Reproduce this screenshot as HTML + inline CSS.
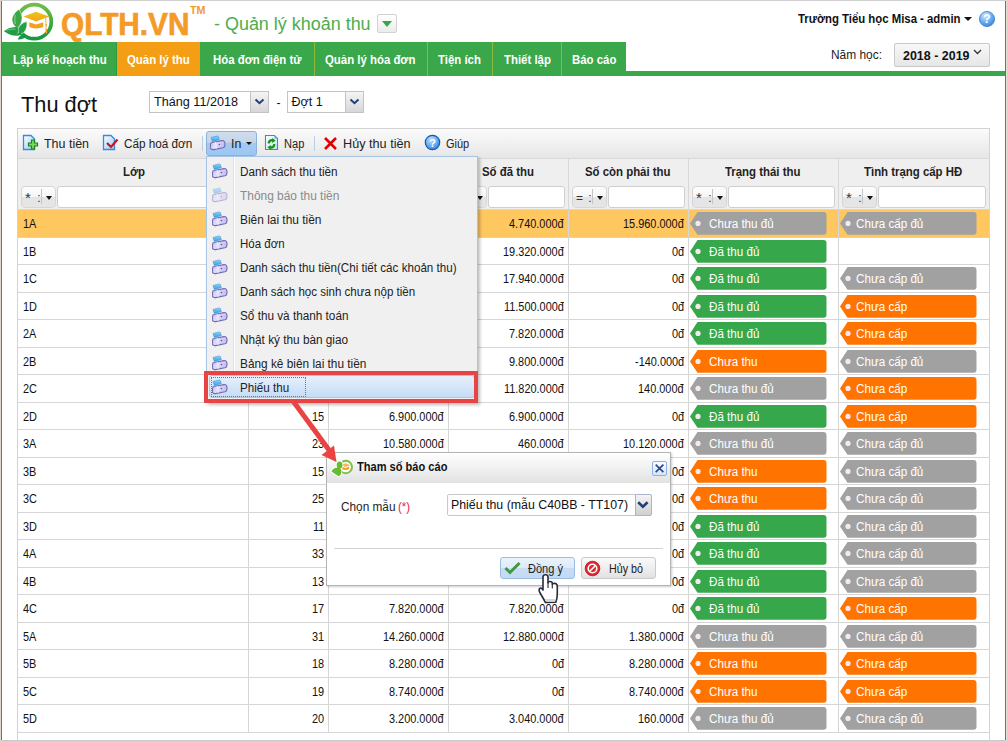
<!DOCTYPE html><html><head><meta charset="utf-8"><style>
*{box-sizing:border-box;margin:0;padding:0}
html,body{width:1007px;height:741px;overflow:hidden;background:#fff;font-family:"Liberation Sans",sans-serif;color:#000}
div,span,svg{position:absolute}
.t{white-space:nowrap;line-height:1}
.tag{border-radius:0 4px 4px 0}
</style></head><body>
<div style="left:0;top:0;width:1007px;height:1px;background:#d0d0d0"></div>
<div style="left:0;top:740px;width:1007px;height:1px;background:#c9c9c9"></div>
<div style="left:0;top:0;width:1px;height:741px;background:#e3d6cb"></div>
<div style="left:1px;top:1px;width:1px;height:739px;background:#2584d8"></div>
<div style="left:1005px;top:1px;width:1px;height:739px;background:#2584d8"></div>
<div style="left:1006px;top:0;width:1px;height:741px;background:#e6dcd2"></div>
<svg style="left:0;top:0" width="60" height="44" viewBox="0 0 60 44">
<defs><linearGradient id="lg" x1="0" y1="0" x2="0" y2="1"><stop offset="0" stop-color="#6fbe45"/><stop offset="1" stop-color="#17983f"/></linearGradient>
<linearGradient id="lf" x1="0" y1="0" x2="0" y2="1"><stop offset="0" stop-color="#4cb047"/><stop offset="1" stop-color="#14963e"/></linearGradient>
<linearGradient id="cap" x1="0" y1="0" x2="0" y2="1"><stop offset="0" stop-color="#ecc516"/><stop offset="1" stop-color="#f4a21c"/></linearGradient></defs>
<circle cx="34.3" cy="21.7" r="17" fill="none" stroke="url(#lg)" stroke-width="3.8"/>
<path d="M18.5 9.6 C14 13 11.5 17.5 12.2 21 C12.7 24.5 15 27 17.6 28 C20.5 25.5 22.2 21.5 22 17.5 C21.9 14.5 20.5 11.5 18.5 9.6Z" fill="#3aa646" stroke="#fff" stroke-width="0.5"/>
<path d="M3.9 31.3 C6.5 28.8 10.5 27 15.6 26.9 C17.5 27 18.5 27.8 19.5 29 C18 32.5 16.5 35 15 35.7 C11 35.5 7 33.5 3.9 31.3Z" fill="#1f9e45"/>
<path d="M18.3 29 C19.5 25 22.5 22.5 26.8 21.6 C27.3 25 26.5 29 25 31 C23.5 33 21.5 34 19.5 34.2 C18.5 32.5 18.2 30.5 18.3 29Z" fill="#22a045" stroke="#fff" stroke-width="0.5"/>
<path d="M15 35.5 C16.5 34 18 33 19.5 32 L22 34.5 C20 35.5 18 36 15 35.5Z" fill="#1c9a44"/>
<path d="M17.8 39.5 C18.5 37 20.5 35 22.5 34.5 L25 34 C26 35 27 35.5 27.5 36 C25 38 21.5 39.8 17.8 39.5Z" fill="#139a48"/>
<path d="M15.3 15 C14.7 18 14.7 21.5 15.3 24" fill="none" stroke="#fff" stroke-width="0.6" opacity="0.75"/>
<path d="M6.5 30.6 C9.5 29.2 12.5 28.8 15.5 29.2" fill="none" stroke="#fff" stroke-width="0.6" opacity="0.6"/>
<path d="M23.6 16.4 L36 11.8 L49.4 16.4 L36 21.6Z" fill="url(#cap)"/>
<path d="M29.3 22.3 L36.2 24.6 L43.3 22.3 V26.8 C40 29 32.5 29 29.3 26.8Z" fill="#f5a01f"/>
<path d="M45.6 17 L46.3 31" stroke="#f3b02a" stroke-width="0.9"/><circle cx="46.3" cy="25" r="0.9" fill="#f3b02a"/><path d="M45.6 29 L47.4 29 L47 33.5 L45.8 33.5Z" fill="#f5a01f"/>
</svg>
<div class="t" style="left:61.30px;top:8.84px;font-size:31.5px;font-weight:bold;color:#f49b27;transform:scaleX(0.9455);transform-origin:0 0;-webkit-text-stroke:0.7px #f49b27">QLTH.VN</div>
<div class="t" style="left:189.50px;top:5.11px;font-size:10.5px;font-weight:bold;color:#f49b27;transform:scaleX(1.0216);transform-origin:0 0;">TM</div>
<div class="t" style="left:214.00px;top:15.79px;font-size:17.5px;color:#4cae4c;transform:scaleX(1.0253);transform-origin:0 0;">- Quản lý khoản thu</div>
<div style="left:377px;top:14px;width:20px;height:19px;border:1px solid #d2d2d2;border-radius:2px;background:linear-gradient(#fff,#ececec)">
<div style="left:4px;top:6px;width:0;height:0;border-left:5px solid transparent;border-right:5px solid transparent;border-top:6px solid #3aa64b"></div></div>
<div class="t" style="left:797.50px;top:12.54px;font-size:12px;font-weight:bold;color:#111;transform:scaleX(0.9465);transform-origin:0 0;">Trường Tiểu học Misa - admin</div>
<div style="left:963.5px;top:16.5px;width:0;height:0;border-left:4px solid transparent;border-right:4px solid transparent;border-top:4.5px solid #111"></div>
<svg style="left:978px;top:10px" width="18" height="18" viewBox="0 0 18 18"><defs><radialGradient id="hg" cx="0.4" cy="0.3" r="0.7"><stop offset="0" stop-color="#d8ecff"/><stop offset="0.6" stop-color="#6aaef0"/><stop offset="1" stop-color="#3f86d8"/></radialGradient></defs>
<circle cx="9" cy="9" r="7.6" fill="url(#hg)" stroke="#3a7fd0" stroke-width="0.8"/><text x="9" y="13.2" text-anchor="middle" font-family="Liberation Sans" font-weight="bold" font-size="12" fill="#fff">?</text></svg>
<div style="left:2px;top:71px;width:1003px;height:5px;background:#39a74a"></div>
<div style="left:2px;top:42px;width:115px;height:34px;background:#39a74a"></div>
<div class="t" style="left:12.62px;top:53.64px;font-size:12px;font-weight:bold;color:#fff;transform:scaleX(0.9500);transform-origin:0 0;">Lập kế hoạch thu</div>
<div style="left:117px;top:42px;width:83px;height:34px;background:#f49e16"></div>
<div class="t" style="left:127.15px;top:53.64px;font-size:12px;font-weight:bold;color:#fff;transform:scaleX(0.9500);transform-origin:0 0;">Quản lý thu</div>
<div style="left:200px;top:42px;width:114px;height:34px;background:#39a74a"></div>
<div class="t" style="left:212.72px;top:53.64px;font-size:12px;font-weight:bold;color:#fff;transform:scaleX(0.9500);transform-origin:0 0;">Hóa đơn điện tử</div>
<div style="left:314px;top:42px;width:113px;height:34px;background:#39a74a"></div>
<div class="t" style="left:325.28px;top:53.64px;font-size:12px;font-weight:bold;color:#fff;transform:scaleX(0.9500);transform-origin:0 0;">Quản lý hóa đơn</div>
<div style="left:427px;top:42px;width:65px;height:34px;background:#39a74a"></div>
<div class="t" style="left:438.07px;top:53.64px;font-size:12px;font-weight:bold;color:#fff;transform:scaleX(0.9500);transform-origin:0 0;">Tiện ích</div>
<div style="left:492px;top:42px;width:70px;height:34px;background:#39a74a"></div>
<div class="t" style="left:503.56px;top:53.64px;font-size:12px;font-weight:bold;color:#fff;transform:scaleX(0.9500);transform-origin:0 0;">Thiết lập</div>
<div style="left:562px;top:42px;width:64px;height:34px;background:#39a74a"></div>
<div class="t" style="left:571.82px;top:53.64px;font-size:12px;font-weight:bold;color:#fff;transform:scaleX(0.9500);transform-origin:0 0;">Báo cáo</div>
<div style="left:314px;top:42px;width:1px;height:34px;background:#8fba3c"></div>
<div style="left:427px;top:42px;width:1px;height:34px;background:#8fba3c"></div>
<div style="left:492px;top:42px;width:1px;height:34px;background:#8fba3c"></div>
<div style="left:561px;top:42px;width:1px;height:34px;background:#8fba3c"></div>
<div style="left:116px;top:42px;width:1px;height:34px;background:#2e9840"></div>
<div class="t" style="left:831.00px;top:49.42px;font-size:12.5px;color:#222;transform:scaleX(0.9533);transform-origin:0 0;">Năm học:</div>
<div style="left:894px;top:43px;width:96px;height:24px;border:1px solid #c9c9c9;border-radius:2px;background:linear-gradient(#f8f8f8,#e6e6e6)"></div>
<svg style="left:973px;top:49px" width="9" height="6"><path d="M1 1 L4.5 4.5 L8 1" fill="none" stroke="#333" stroke-width="1.3"/></svg>
<div class="t" style="left:903.00px;top:49.07px;font-size:13.5px;font-weight:bold;color:#111;transform:scaleX(0.9228);transform-origin:0 0;">2018 - 2019</div>
<div class="t" style="left:21.00px;top:94.38px;font-size:22px;color:#111;transform:scaleX(0.9896);transform-origin:0 0;">Thu đợt</div>
<div style="left:149px;top:91px;width:120px;height:22px;border:1px solid #c3c3c3;background:#fff"></div>
<div style="left:250px;top:92px;width:18px;height:20px;border-left:1px solid #c3c3c3;background:linear-gradient(#f4f4f4,#d6d6d6)"></div>
<svg style="left:254px;top:98px" width="11" height="8"><path d="M1.5 1.5 L5.5 5.2 L9.5 1.5" fill="none" stroke="#1f3e7c" stroke-width="2"/></svg>
<div class="t" style="left:153.50px;top:96.42px;font-size:12.5px;color:#111;transform:scaleX(1.0098);transform-origin:0 0;">Tháng 11/2018</div>
<div class="t" style="left:276.50px;top:96.84px;font-size:12px;color:#111;">-</div>
<div style="left:287px;top:91px;width:77px;height:22px;border:1px solid #c3c3c3;background:#fff"></div>
<div style="left:345px;top:92px;width:18px;height:20px;border-left:1px solid #c3c3c3;background:linear-gradient(#f4f4f4,#d6d6d6)"></div>
<svg style="left:349px;top:98px" width="11" height="8"><path d="M1.5 1.5 L5.5 5.2 L9.5 1.5" fill="none" stroke="#1f3e7c" stroke-width="2"/></svg>
<div class="t" style="left:291.50px;top:96.42px;font-size:12.5px;color:#111;">Đợt 1</div>
<div style="left:17px;top:128px;width:973px;height:31px;border:1px solid #d3d3d3;background:linear-gradient(#fbfbfb,#e6e6e6)"></div>
<div style="left:206px;top:131px;width:51px;height:25px;border:1px solid #8db2d9;border-radius:3px;background:linear-gradient(#cfdded 0%,#c4d6ea 45%,#a3c9f0 50%,#9cc6f2 100%)"></div>
<div style="left:202px;top:136px;width:1px;height:15px;background:#b8cfe6"></div>
<div style="left:314px;top:136px;width:1px;height:15px;background:#b8cfe6"></div>
<svg style="left:22px;top:134px" width="18" height="17" viewBox="0 0 18 17">
<defs><linearGradient id="dg" x1="0" y1="0" x2="1" y2="1"><stop offset="0" stop-color="#fff"/><stop offset="1" stop-color="#9cc8f0"/></linearGradient></defs>
<path d="M1.5 1.5 H9 L12.5 5 V15.5 H1.5Z" fill="url(#dg)" stroke="#2f8ee0" stroke-width="1.3"/>
<path d="M9.5 6 h3 v3 h3 v3 h-3 v3 h-3 v-3 h-3 v-3 h3Z" fill="#7fd36a" stroke="#138a13" stroke-width="1.2"/></svg>
<div class="t" style="left:44.00px;top:137.84px;font-size:12px;color:#222;transform:scaleX(1.0378);transform-origin:0 0;">Thu tiền</div>
<svg style="left:102px;top:134px" width="18" height="17" viewBox="0 0 18 17">
<path d="M1.5 1.5 H9 L12.5 5 V15.5 H1.5Z" fill="url(#dg)" stroke="#2f8ee0" stroke-width="1.3"/>
<path d="M5 9 L9 13 L15.5 5.5" fill="none" stroke="#d0101a" stroke-width="2.2"/></svg>
<div class="t" style="left:124.00px;top:137.84px;font-size:12px;color:#222;transform:scaleX(0.9768);transform-origin:0 0;">Cấp hoá đơn</div>
<svg style="left:210px;top:134px" width="17" height="17" viewBox="0 0 17 17" opacity="1">
<defs><linearGradient id="pb210134" x1="0" y1="0" x2="1" y2="0.2"><stop offset="0" stop-color="#bdb8ec"/><stop offset="0.4" stop-color="#e2defc"/><stop offset="1" stop-color="#c2bdf0"/></linearGradient>
<linearGradient id="pp210134" x1="0" y1="0" x2="0" y2="1"><stop offset="0" stop-color="#8ad6fa"/><stop offset="1" stop-color="#3a9ee8"/></linearGradient></defs>
<path d="M1.1 3.4 L7.9 1.9 L9.4 5.5 L2.3 7.4Z" fill="url(#pp210134)" stroke="#3a94e0" stroke-width="0.6"/>
<path d="M0.6 9.8 C0.8 8.8 1.8 8.4 3 8.3 L12 6.6 C13.8 6.3 15 7.8 15 9.6 L14.8 12 C14.7 13 14 13.5 13 13.8 L3.5 15.6 C1.6 15.9 0.3 14.8 0.3 13.2Z" fill="url(#pb210134)" stroke="#716bb0" stroke-width="1.1"/>
<path d="M5.2 8 C6 10 6.3 12.5 6.1 15" fill="none" stroke="#f6f4ff" stroke-width="0.9"/><circle cx="9.4" cy="10.5" r="0.75" fill="#5a549c"/></svg>
<div class="t" style="left:231.40px;top:137.84px;font-size:12px;color:#222;transform:scaleX(1.0284);transform-origin:0 0;">In</div>
<div style="left:246px;top:142px;width:0;height:0;border-left:3px solid transparent;border-right:3px solid transparent;border-top:3px solid #111"></div>
<svg style="left:264px;top:134px" width="15" height="17" viewBox="0 0 15 17">
<defs><linearGradient id="ng" x1="0" y1="0" x2="1" y2="1"><stop offset="0" stop-color="#ffffff"/><stop offset="1" stop-color="#c8dcf8"/></linearGradient></defs>
<path d="M1.5 1.5 H10.5 L13.5 4.5 V15.5 H1.5Z" fill="url(#ng)" stroke="#6878c0" stroke-width="1.1"/>
<path d="M10.5 1.5 L13.5 4.5 H10.5Z" fill="#5aa8f0"/>
<path d="M4.6 9.4 Q5 6 8.6 6.1" fill="none" stroke="#079a07" stroke-width="2.2"/><path d="M8 3.9 L11.6 6.6 L8.2 8.9Z" fill="#079a07"/>
<path d="M10.4 10.2 Q10 13.8 6.4 13.7" fill="none" stroke="#079a07" stroke-width="2.2"/><path d="M7 15.9 L3.4 13.2 L6.8 10.9Z" fill="#079a07"/></svg>
<div class="t" style="left:284.00px;top:137.84px;font-size:12px;color:#222;transform:scaleX(0.9221);transform-origin:0 0;">Nạp</div>
<svg style="left:323px;top:136px" width="15" height="15" viewBox="0 0 15 15"><path d="M2 2 L13 13 M13 2 L2 13" stroke="#e00000" stroke-width="2.6"/></svg>
<div class="t" style="left:343.20px;top:137.84px;font-size:12px;color:#222;transform:scaleX(1.0555);transform-origin:0 0;">Hủy thu tiền</div>
<svg style="left:424px;top:134px" width="17" height="17" viewBox="0 0 17 17"><defs><radialGradient id="qg" cx="0.4" cy="0.3" r="0.7"><stop offset="0" stop-color="#bfe0ff"/><stop offset="1" stop-color="#3a8ae8"/></radialGradient></defs>
<circle cx="8.5" cy="8.5" r="7.2" fill="url(#qg)" stroke="#0f5ab0" stroke-width="1.2"/><text x="8.5" y="12.6" text-anchor="middle" font-family="Liberation Sans" font-weight="bold" font-size="11" fill="#fff">?</text></svg>
<div class="t" style="left:446.00px;top:137.84px;font-size:12px;color:#222;transform:scaleX(0.9148);transform-origin:0 0;">Giúp</div>
<div style="left:17px;top:158px;width:973px;height:52px;background:#efefef;border-left:1px solid #d3d3d3;border-right:1px solid #d3d3d3;border-top:1px solid #d9d9d9"></div>
<div class="t" style="left:122.68px;top:166.24px;font-size:12px;font-weight:bold;color:#222;transform:scaleX(0.9500);transform-origin:0 0;">Lớp</div>
<div style="left:21px;top:186px;width:35px;height:22px;border:1px solid #d6d6d6;border-radius:4px;background:linear-gradient(#fdfdfd 0%,#f6f6f6 48%,#e4e4e4 50%,#e6e6e6 100%)"></div>
<div style="left:41px;top:189px;width:1px;height:15px;background:#c4c4c4"></div>
<div style="left:46px;top:196px;width:0;height:0;border-left:3px solid transparent;border-right:3px solid transparent;border-top:4px solid #111"></div>
<div class="t" style="left:25.00px;top:190.00px;font-size:15px;color:#333;">*</div>
<div class="t" style="left:37.30px;top:192.04px;font-size:12px;color:#333;">:</div>
<div style="left:57px;top:186px;width:188px;height:22px;border:1px solid #cfcfcf;border-radius:3px;background:#fff"></div>
<div style="left:248px;top:159px;width:1px;height:51px;background:#d8d8d8"></div>
<div style="left:252px;top:186px;width:35px;height:22px;border:1px solid #d6d6d6;border-radius:4px;background:linear-gradient(#fdfdfd 0%,#f6f6f6 48%,#e4e4e4 50%,#e6e6e6 100%)"></div>
<div style="left:272px;top:189px;width:1px;height:15px;background:#c4c4c4"></div>
<div style="left:277px;top:196px;width:0;height:0;border-left:3px solid transparent;border-right:3px solid transparent;border-top:4px solid #111"></div>
<div class="t" style="left:256.00px;top:192.04px;font-size:12px;color:#333;">=</div>
<div class="t" style="left:268.30px;top:192.04px;font-size:12px;color:#333;">:</div>
<div style="left:288px;top:186px;width:37px;height:22px;border:1px solid #cfcfcf;border-radius:3px;background:#fff"></div>
<div style="left:328px;top:159px;width:1px;height:51px;background:#d8d8d8"></div>
<div style="left:332px;top:186px;width:35px;height:22px;border:1px solid #d6d6d6;border-radius:4px;background:linear-gradient(#fdfdfd 0%,#f6f6f6 48%,#e4e4e4 50%,#e6e6e6 100%)"></div>
<div style="left:352px;top:189px;width:1px;height:15px;background:#c4c4c4"></div>
<div style="left:357px;top:196px;width:0;height:0;border-left:3px solid transparent;border-right:3px solid transparent;border-top:4px solid #111"></div>
<div class="t" style="left:336.00px;top:192.04px;font-size:12px;color:#333;">=</div>
<div class="t" style="left:348.30px;top:192.04px;font-size:12px;color:#333;">:</div>
<div style="left:368px;top:186px;width:77px;height:22px;border:1px solid #cfcfcf;border-radius:3px;background:#fff"></div>
<div style="left:448px;top:159px;width:1px;height:51px;background:#d8d8d8"></div>
<div class="t" style="left:482.03px;top:166.24px;font-size:12px;font-weight:bold;color:#222;transform:scaleX(0.9500);transform-origin:0 0;">Số đã thu</div>
<div style="left:452px;top:186px;width:35px;height:22px;border:1px solid #d6d6d6;border-radius:4px;background:linear-gradient(#fdfdfd 0%,#f6f6f6 48%,#e4e4e4 50%,#e6e6e6 100%)"></div>
<div style="left:472px;top:189px;width:1px;height:15px;background:#c4c4c4"></div>
<div style="left:477px;top:196px;width:0;height:0;border-left:3px solid transparent;border-right:3px solid transparent;border-top:4px solid #111"></div>
<div class="t" style="left:456.00px;top:192.04px;font-size:12px;color:#333;">=</div>
<div class="t" style="left:468.30px;top:192.04px;font-size:12px;color:#333;">:</div>
<div style="left:488px;top:186px;width:77px;height:22px;border:1px solid #cfcfcf;border-radius:3px;background:#fff"></div>
<div style="left:568px;top:159px;width:1px;height:51px;background:#d8d8d8"></div>
<div class="t" style="left:585.25px;top:166.24px;font-size:12px;font-weight:bold;color:#222;transform:scaleX(0.9500);transform-origin:0 0;">Số còn phải thu</div>
<div style="left:572px;top:186px;width:35px;height:22px;border:1px solid #d6d6d6;border-radius:4px;background:linear-gradient(#fdfdfd 0%,#f6f6f6 48%,#e4e4e4 50%,#e6e6e6 100%)"></div>
<div style="left:592px;top:189px;width:1px;height:15px;background:#c4c4c4"></div>
<div style="left:597px;top:196px;width:0;height:0;border-left:3px solid transparent;border-right:3px solid transparent;border-top:4px solid #111"></div>
<div class="t" style="left:576.00px;top:192.04px;font-size:12px;color:#333;">=</div>
<div class="t" style="left:588.30px;top:192.04px;font-size:12px;color:#333;">:</div>
<div style="left:608px;top:186px;width:77px;height:22px;border:1px solid #cfcfcf;border-radius:3px;background:#fff"></div>
<div style="left:688px;top:159px;width:1px;height:51px;background:#d8d8d8"></div>
<div class="t" style="left:725.31px;top:166.24px;font-size:12px;font-weight:bold;color:#222;transform:scaleX(0.9500);transform-origin:0 0;">Trạng thái thu</div>
<div style="left:692px;top:186px;width:35px;height:22px;border:1px solid #d6d6d6;border-radius:4px;background:linear-gradient(#fdfdfd 0%,#f6f6f6 48%,#e4e4e4 50%,#e6e6e6 100%)"></div>
<div style="left:712px;top:189px;width:1px;height:15px;background:#c4c4c4"></div>
<div style="left:717px;top:196px;width:0;height:0;border-left:3px solid transparent;border-right:3px solid transparent;border-top:4px solid #111"></div>
<div class="t" style="left:696.00px;top:190.00px;font-size:15px;color:#333;">*</div>
<div class="t" style="left:708.30px;top:192.04px;font-size:12px;color:#333;">:</div>
<div style="left:728px;top:186px;width:107px;height:22px;border:1px solid #cfcfcf;border-radius:3px;background:#fff"></div>
<div style="left:838px;top:159px;width:1px;height:51px;background:#d8d8d8"></div>
<div class="t" style="left:864.41px;top:166.24px;font-size:12px;font-weight:bold;color:#222;transform:scaleX(0.9500);transform-origin:0 0;">Tình trạng cấp HĐ</div>
<div style="left:842px;top:186px;width:35px;height:22px;border:1px solid #d6d6d6;border-radius:4px;background:linear-gradient(#fdfdfd 0%,#f6f6f6 48%,#e4e4e4 50%,#e6e6e6 100%)"></div>
<div style="left:862px;top:189px;width:1px;height:15px;background:#c4c4c4"></div>
<div style="left:867px;top:196px;width:0;height:0;border-left:3px solid transparent;border-right:3px solid transparent;border-top:4px solid #111"></div>
<div class="t" style="left:846.00px;top:190.00px;font-size:15px;color:#333;">*</div>
<div class="t" style="left:858.30px;top:192.04px;font-size:12px;color:#333;">:</div>
<div style="left:878px;top:186px;width:108px;height:22px;border:1px solid #cfcfcf;border-radius:3px;background:#fff"></div>
<div style="left:17px;top:209px;width:973px;height:1px;background:#d6d6d6"></div>
<div style="left:17px;top:210px;width:973px;height:28px;background:#fec760;border-left:1px solid #d3d3d3;border-right:1px solid #d3d3d3;border-bottom:1px solid #d6d6d6"></div>
<div style="left:248px;top:210px;width:1px;height:27px;background:#d6d6d6"></div>
<div style="left:328px;top:210px;width:1px;height:27px;background:#d6d6d6"></div>
<div style="left:448px;top:210px;width:1px;height:27px;background:#d6d6d6"></div>
<div style="left:568px;top:210px;width:1px;height:27px;background:#d6d6d6"></div>
<div style="left:688px;top:210px;width:1px;height:27px;background:#d6d6d6"></div>
<div style="left:838px;top:210px;width:1px;height:27px;background:#d6d6d6"></div>
<div class="t" style="left:22.70px;top:217.94px;font-size:12px;color:#111;transform:scaleX(0.9100);transform-origin:0 0;">1A</div>
<div class="t" style="left:509.34px;top:217.94px;font-size:12px;color:#111;transform:scaleX(0.9100);transform-origin:0 0;">4.740.000đ</div>
<div class="t" style="left:623.27px;top:217.94px;font-size:12px;color:#111;transform:scaleX(0.9100);transform-origin:0 0;">15.960.000đ</div>
<svg style="left:690px;top:212.00px" width="136.5" height="22.8" viewBox="0 0 136.5 22.8">
<path d="M0 11.4 L7.5 0 H133.5 Q136.5 0 136.5 3 V19.8 Q136.5 22.8 133.5 22.8 H7.5Z" fill="#a1a1a1"/>
<circle cx="8" cy="11.4" r="2.6" fill="#f6e8ee"/></svg>
<div class="t" style="left:708.50px;top:217.94px;font-size:12px;color:#fff;transform:scaleX(0.9700);transform-origin:0 0;">Chưa thu đủ</div>
<svg style="left:840px;top:212.00px" width="136.5" height="22.8" viewBox="0 0 136.5 22.8">
<path d="M0 11.4 L7.5 0 H133.5 Q136.5 0 136.5 3 V19.8 Q136.5 22.8 133.5 22.8 H7.5Z" fill="#a1a1a1"/>
<circle cx="8" cy="11.4" r="2.6" fill="#f6e8ee"/></svg>
<div class="t" style="left:856.40px;top:217.94px;font-size:12px;color:#fff;transform:scaleX(0.9700);transform-origin:0 0;">Chưa cấp đủ</div>
<div style="left:17px;top:238px;width:973px;height:27px;background:#fff;border-left:1px solid #d3d3d3;border-right:1px solid #d3d3d3;border-bottom:1px solid #d6d6d6"></div>
<div style="left:248px;top:238px;width:1px;height:26px;background:#d6d6d6"></div>
<div style="left:328px;top:238px;width:1px;height:26px;background:#d6d6d6"></div>
<div style="left:448px;top:238px;width:1px;height:26px;background:#d6d6d6"></div>
<div style="left:568px;top:238px;width:1px;height:26px;background:#d6d6d6"></div>
<div style="left:688px;top:238px;width:1px;height:26px;background:#d6d6d6"></div>
<div style="left:838px;top:238px;width:1px;height:26px;background:#d6d6d6"></div>
<div class="t" style="left:22.70px;top:245.94px;font-size:12px;color:#111;transform:scaleX(0.9100);transform-origin:0 0;">1B</div>
<div class="t" style="left:503.27px;top:245.94px;font-size:12px;color:#111;transform:scaleX(0.9100);transform-origin:0 0;">19.320.000đ</div>
<div class="t" style="left:671.84px;top:245.94px;font-size:12px;color:#111;transform:scaleX(0.9100);transform-origin:0 0;">0đ</div>
<svg style="left:690px;top:240.00px" width="136.5" height="22.8" viewBox="0 0 136.5 22.8">
<path d="M0 11.4 L7.5 0 H133.5 Q136.5 0 136.5 3 V19.8 Q136.5 22.8 133.5 22.8 H7.5Z" fill="#36a74a"/>
<circle cx="8" cy="11.4" r="2.6" fill="#f6e8ee"/></svg>
<div class="t" style="left:708.50px;top:245.94px;font-size:12px;color:#fff;transform:scaleX(0.9700);transform-origin:0 0;">Đã thu đủ</div>
<div style="left:17px;top:265px;width:973px;height:28px;background:#fff;border-left:1px solid #d3d3d3;border-right:1px solid #d3d3d3;border-bottom:1px solid #d6d6d6"></div>
<div style="left:248px;top:265px;width:1px;height:27px;background:#d6d6d6"></div>
<div style="left:328px;top:265px;width:1px;height:27px;background:#d6d6d6"></div>
<div style="left:448px;top:265px;width:1px;height:27px;background:#d6d6d6"></div>
<div style="left:568px;top:265px;width:1px;height:27px;background:#d6d6d6"></div>
<div style="left:688px;top:265px;width:1px;height:27px;background:#d6d6d6"></div>
<div style="left:838px;top:265px;width:1px;height:27px;background:#d6d6d6"></div>
<div class="t" style="left:22.70px;top:272.94px;font-size:12px;color:#111;transform:scaleX(0.9100);transform-origin:0 0;">1C</div>
<div class="t" style="left:503.27px;top:272.94px;font-size:12px;color:#111;transform:scaleX(0.9100);transform-origin:0 0;">17.940.000đ</div>
<div class="t" style="left:671.84px;top:272.94px;font-size:12px;color:#111;transform:scaleX(0.9100);transform-origin:0 0;">0đ</div>
<svg style="left:690px;top:267.00px" width="136.5" height="22.8" viewBox="0 0 136.5 22.8">
<path d="M0 11.4 L7.5 0 H133.5 Q136.5 0 136.5 3 V19.8 Q136.5 22.8 133.5 22.8 H7.5Z" fill="#36a74a"/>
<circle cx="8" cy="11.4" r="2.6" fill="#f6e8ee"/></svg>
<div class="t" style="left:708.50px;top:272.94px;font-size:12px;color:#fff;transform:scaleX(0.9700);transform-origin:0 0;">Đã thu đủ</div>
<svg style="left:840px;top:267.00px" width="136.5" height="22.8" viewBox="0 0 136.5 22.8">
<path d="M0 11.4 L7.5 0 H133.5 Q136.5 0 136.5 3 V19.8 Q136.5 22.8 133.5 22.8 H7.5Z" fill="#a1a1a1"/>
<circle cx="8" cy="11.4" r="2.6" fill="#f6e8ee"/></svg>
<div class="t" style="left:856.40px;top:272.94px;font-size:12px;color:#fff;transform:scaleX(0.9700);transform-origin:0 0;">Chưa cấp đủ</div>
<div style="left:17px;top:293px;width:973px;height:27px;background:#fff;border-left:1px solid #d3d3d3;border-right:1px solid #d3d3d3;border-bottom:1px solid #d6d6d6"></div>
<div style="left:248px;top:293px;width:1px;height:26px;background:#d6d6d6"></div>
<div style="left:328px;top:293px;width:1px;height:26px;background:#d6d6d6"></div>
<div style="left:448px;top:293px;width:1px;height:26px;background:#d6d6d6"></div>
<div style="left:568px;top:293px;width:1px;height:26px;background:#d6d6d6"></div>
<div style="left:688px;top:293px;width:1px;height:26px;background:#d6d6d6"></div>
<div style="left:838px;top:293px;width:1px;height:26px;background:#d6d6d6"></div>
<div class="t" style="left:22.70px;top:300.94px;font-size:12px;color:#111;transform:scaleX(0.9100);transform-origin:0 0;">1D</div>
<div class="t" style="left:504.08px;top:300.94px;font-size:12px;color:#111;transform:scaleX(0.9100);transform-origin:0 0;">11.500.000đ</div>
<div class="t" style="left:671.84px;top:300.94px;font-size:12px;color:#111;transform:scaleX(0.9100);transform-origin:0 0;">0đ</div>
<svg style="left:690px;top:295.00px" width="136.5" height="22.8" viewBox="0 0 136.5 22.8">
<path d="M0 11.4 L7.5 0 H133.5 Q136.5 0 136.5 3 V19.8 Q136.5 22.8 133.5 22.8 H7.5Z" fill="#36a74a"/>
<circle cx="8" cy="11.4" r="2.6" fill="#f6e8ee"/></svg>
<div class="t" style="left:708.50px;top:300.94px;font-size:12px;color:#fff;transform:scaleX(0.9700);transform-origin:0 0;">Đã thu đủ</div>
<svg style="left:840px;top:295.00px" width="136.5" height="22.8" viewBox="0 0 136.5 22.8">
<path d="M0 11.4 L7.5 0 H133.5 Q136.5 0 136.5 3 V19.8 Q136.5 22.8 133.5 22.8 H7.5Z" fill="#ff7300"/>
<circle cx="8" cy="11.4" r="2.6" fill="#f6e8ee"/></svg>
<div class="t" style="left:856.40px;top:300.94px;font-size:12px;color:#fff;transform:scaleX(0.9700);transform-origin:0 0;">Chưa cấp</div>
<div style="left:17px;top:320px;width:973px;height:28px;background:#fff;border-left:1px solid #d3d3d3;border-right:1px solid #d3d3d3;border-bottom:1px solid #d6d6d6"></div>
<div style="left:248px;top:320px;width:1px;height:27px;background:#d6d6d6"></div>
<div style="left:328px;top:320px;width:1px;height:27px;background:#d6d6d6"></div>
<div style="left:448px;top:320px;width:1px;height:27px;background:#d6d6d6"></div>
<div style="left:568px;top:320px;width:1px;height:27px;background:#d6d6d6"></div>
<div style="left:688px;top:320px;width:1px;height:27px;background:#d6d6d6"></div>
<div style="left:838px;top:320px;width:1px;height:27px;background:#d6d6d6"></div>
<div class="t" style="left:22.70px;top:327.94px;font-size:12px;color:#111;transform:scaleX(0.9100);transform-origin:0 0;">2A</div>
<div class="t" style="left:509.34px;top:327.94px;font-size:12px;color:#111;transform:scaleX(0.9100);transform-origin:0 0;">7.820.000đ</div>
<div class="t" style="left:671.84px;top:327.94px;font-size:12px;color:#111;transform:scaleX(0.9100);transform-origin:0 0;">0đ</div>
<svg style="left:690px;top:322.00px" width="136.5" height="22.8" viewBox="0 0 136.5 22.8">
<path d="M0 11.4 L7.5 0 H133.5 Q136.5 0 136.5 3 V19.8 Q136.5 22.8 133.5 22.8 H7.5Z" fill="#36a74a"/>
<circle cx="8" cy="11.4" r="2.6" fill="#f6e8ee"/></svg>
<div class="t" style="left:708.50px;top:327.94px;font-size:12px;color:#fff;transform:scaleX(0.9700);transform-origin:0 0;">Đã thu đủ</div>
<svg style="left:840px;top:322.00px" width="136.5" height="22.8" viewBox="0 0 136.5 22.8">
<path d="M0 11.4 L7.5 0 H133.5 Q136.5 0 136.5 3 V19.8 Q136.5 22.8 133.5 22.8 H7.5Z" fill="#ff7300"/>
<circle cx="8" cy="11.4" r="2.6" fill="#f6e8ee"/></svg>
<div class="t" style="left:856.40px;top:327.94px;font-size:12px;color:#fff;transform:scaleX(0.9700);transform-origin:0 0;">Chưa cấp</div>
<div style="left:17px;top:348px;width:973px;height:27px;background:#fff;border-left:1px solid #d3d3d3;border-right:1px solid #d3d3d3;border-bottom:1px solid #d6d6d6"></div>
<div style="left:248px;top:348px;width:1px;height:26px;background:#d6d6d6"></div>
<div style="left:328px;top:348px;width:1px;height:26px;background:#d6d6d6"></div>
<div style="left:448px;top:348px;width:1px;height:26px;background:#d6d6d6"></div>
<div style="left:568px;top:348px;width:1px;height:26px;background:#d6d6d6"></div>
<div style="left:688px;top:348px;width:1px;height:26px;background:#d6d6d6"></div>
<div style="left:838px;top:348px;width:1px;height:26px;background:#d6d6d6"></div>
<div class="t" style="left:22.70px;top:355.94px;font-size:12px;color:#111;transform:scaleX(0.9100);transform-origin:0 0;">2B</div>
<div class="t" style="left:509.34px;top:355.94px;font-size:12px;color:#111;transform:scaleX(0.9100);transform-origin:0 0;">9.800.000đ</div>
<div class="t" style="left:634.82px;top:355.94px;font-size:12px;color:#111;transform:scaleX(0.9100);transform-origin:0 0;">-140.000đ</div>
<svg style="left:690px;top:350.00px" width="136.5" height="22.8" viewBox="0 0 136.5 22.8">
<path d="M0 11.4 L7.5 0 H133.5 Q136.5 0 136.5 3 V19.8 Q136.5 22.8 133.5 22.8 H7.5Z" fill="#ff7300"/>
<circle cx="8" cy="11.4" r="2.6" fill="#f6e8ee"/></svg>
<div class="t" style="left:708.50px;top:355.94px;font-size:12px;color:#fff;transform:scaleX(0.9700);transform-origin:0 0;">Chưa thu</div>
<svg style="left:840px;top:350.00px" width="136.5" height="22.8" viewBox="0 0 136.5 22.8">
<path d="M0 11.4 L7.5 0 H133.5 Q136.5 0 136.5 3 V19.8 Q136.5 22.8 133.5 22.8 H7.5Z" fill="#a1a1a1"/>
<circle cx="8" cy="11.4" r="2.6" fill="#f6e8ee"/></svg>
<div class="t" style="left:856.40px;top:355.94px;font-size:12px;color:#fff;transform:scaleX(0.9700);transform-origin:0 0;">Chưa cấp đủ</div>
<div style="left:17px;top:375px;width:973px;height:28px;background:#fff;border-left:1px solid #d3d3d3;border-right:1px solid #d3d3d3;border-bottom:1px solid #d6d6d6"></div>
<div style="left:248px;top:375px;width:1px;height:27px;background:#d6d6d6"></div>
<div style="left:328px;top:375px;width:1px;height:27px;background:#d6d6d6"></div>
<div style="left:448px;top:375px;width:1px;height:27px;background:#d6d6d6"></div>
<div style="left:568px;top:375px;width:1px;height:27px;background:#d6d6d6"></div>
<div style="left:688px;top:375px;width:1px;height:27px;background:#d6d6d6"></div>
<div style="left:838px;top:375px;width:1px;height:27px;background:#d6d6d6"></div>
<div class="t" style="left:22.70px;top:382.94px;font-size:12px;color:#111;transform:scaleX(0.9100);transform-origin:0 0;">2C</div>
<div class="t" style="left:504.08px;top:382.94px;font-size:12px;color:#111;transform:scaleX(0.9100);transform-origin:0 0;">11.820.000đ</div>
<div class="t" style="left:638.44px;top:382.94px;font-size:12px;color:#111;transform:scaleX(0.9100);transform-origin:0 0;">140.000đ</div>
<svg style="left:690px;top:377.00px" width="136.5" height="22.8" viewBox="0 0 136.5 22.8">
<path d="M0 11.4 L7.5 0 H133.5 Q136.5 0 136.5 3 V19.8 Q136.5 22.8 133.5 22.8 H7.5Z" fill="#a1a1a1"/>
<circle cx="8" cy="11.4" r="2.6" fill="#f6e8ee"/></svg>
<div class="t" style="left:708.50px;top:382.94px;font-size:12px;color:#fff;transform:scaleX(0.9700);transform-origin:0 0;">Chưa thu đủ</div>
<svg style="left:840px;top:377.00px" width="136.5" height="22.8" viewBox="0 0 136.5 22.8">
<path d="M0 11.4 L7.5 0 H133.5 Q136.5 0 136.5 3 V19.8 Q136.5 22.8 133.5 22.8 H7.5Z" fill="#ff7300"/>
<circle cx="8" cy="11.4" r="2.6" fill="#f6e8ee"/></svg>
<div class="t" style="left:856.40px;top:382.94px;font-size:12px;color:#fff;transform:scaleX(0.9700);transform-origin:0 0;">Chưa cấp</div>
<div style="left:17px;top:403px;width:973px;height:27px;background:#fff;border-left:1px solid #d3d3d3;border-right:1px solid #d3d3d3;border-bottom:1px solid #d6d6d6"></div>
<div style="left:248px;top:403px;width:1px;height:26px;background:#d6d6d6"></div>
<div style="left:328px;top:403px;width:1px;height:26px;background:#d6d6d6"></div>
<div style="left:448px;top:403px;width:1px;height:26px;background:#d6d6d6"></div>
<div style="left:568px;top:403px;width:1px;height:26px;background:#d6d6d6"></div>
<div style="left:688px;top:403px;width:1px;height:26px;background:#d6d6d6"></div>
<div style="left:838px;top:403px;width:1px;height:26px;background:#d6d6d6"></div>
<div class="t" style="left:22.70px;top:410.94px;font-size:12px;color:#111;transform:scaleX(0.9100);transform-origin:0 0;">2D</div>
<div class="t" style="left:311.84px;top:410.94px;font-size:12px;color:#111;transform:scaleX(0.9100);transform-origin:0 0;">15</div>
<div class="t" style="left:389.34px;top:410.94px;font-size:12px;color:#111;transform:scaleX(0.9100);transform-origin:0 0;">6.900.000đ</div>
<div class="t" style="left:509.34px;top:410.94px;font-size:12px;color:#111;transform:scaleX(0.9100);transform-origin:0 0;">6.900.000đ</div>
<div class="t" style="left:671.84px;top:410.94px;font-size:12px;color:#111;transform:scaleX(0.9100);transform-origin:0 0;">0đ</div>
<svg style="left:690px;top:405.00px" width="136.5" height="22.8" viewBox="0 0 136.5 22.8">
<path d="M0 11.4 L7.5 0 H133.5 Q136.5 0 136.5 3 V19.8 Q136.5 22.8 133.5 22.8 H7.5Z" fill="#36a74a"/>
<circle cx="8" cy="11.4" r="2.6" fill="#f6e8ee"/></svg>
<div class="t" style="left:708.50px;top:410.94px;font-size:12px;color:#fff;transform:scaleX(0.9700);transform-origin:0 0;">Đã thu đủ</div>
<svg style="left:840px;top:405.00px" width="136.5" height="22.8" viewBox="0 0 136.5 22.8">
<path d="M0 11.4 L7.5 0 H133.5 Q136.5 0 136.5 3 V19.8 Q136.5 22.8 133.5 22.8 H7.5Z" fill="#ff7300"/>
<circle cx="8" cy="11.4" r="2.6" fill="#f6e8ee"/></svg>
<div class="t" style="left:856.40px;top:410.94px;font-size:12px;color:#fff;transform:scaleX(0.9700);transform-origin:0 0;">Chưa cấp</div>
<div style="left:17px;top:430px;width:973px;height:28px;background:#fff;border-left:1px solid #d3d3d3;border-right:1px solid #d3d3d3;border-bottom:1px solid #d6d6d6"></div>
<div style="left:248px;top:430px;width:1px;height:27px;background:#d6d6d6"></div>
<div style="left:328px;top:430px;width:1px;height:27px;background:#d6d6d6"></div>
<div style="left:448px;top:430px;width:1px;height:27px;background:#d6d6d6"></div>
<div style="left:568px;top:430px;width:1px;height:27px;background:#d6d6d6"></div>
<div style="left:688px;top:430px;width:1px;height:27px;background:#d6d6d6"></div>
<div style="left:838px;top:430px;width:1px;height:27px;background:#d6d6d6"></div>
<div class="t" style="left:22.70px;top:437.94px;font-size:12px;color:#111;transform:scaleX(0.9100);transform-origin:0 0;">3A</div>
<div class="t" style="left:311.84px;top:437.94px;font-size:12px;color:#111;transform:scaleX(0.9100);transform-origin:0 0;">23</div>
<div class="t" style="left:383.27px;top:437.94px;font-size:12px;color:#111;transform:scaleX(0.9100);transform-origin:0 0;">10.580.000đ</div>
<div class="t" style="left:518.44px;top:437.94px;font-size:12px;color:#111;transform:scaleX(0.9100);transform-origin:0 0;">460.000đ</div>
<div class="t" style="left:623.27px;top:437.94px;font-size:12px;color:#111;transform:scaleX(0.9100);transform-origin:0 0;">10.120.000đ</div>
<svg style="left:690px;top:432.00px" width="136.5" height="22.8" viewBox="0 0 136.5 22.8">
<path d="M0 11.4 L7.5 0 H133.5 Q136.5 0 136.5 3 V19.8 Q136.5 22.8 133.5 22.8 H7.5Z" fill="#a1a1a1"/>
<circle cx="8" cy="11.4" r="2.6" fill="#f6e8ee"/></svg>
<div class="t" style="left:708.50px;top:437.94px;font-size:12px;color:#fff;transform:scaleX(0.9700);transform-origin:0 0;">Chưa thu đủ</div>
<svg style="left:840px;top:432.00px" width="136.5" height="22.8" viewBox="0 0 136.5 22.8">
<path d="M0 11.4 L7.5 0 H133.5 Q136.5 0 136.5 3 V19.8 Q136.5 22.8 133.5 22.8 H7.5Z" fill="#a1a1a1"/>
<circle cx="8" cy="11.4" r="2.6" fill="#f6e8ee"/></svg>
<div class="t" style="left:856.40px;top:437.94px;font-size:12px;color:#fff;transform:scaleX(0.9700);transform-origin:0 0;">Chưa cấp đủ</div>
<div style="left:17px;top:458px;width:973px;height:27px;background:#fff;border-left:1px solid #d3d3d3;border-right:1px solid #d3d3d3;border-bottom:1px solid #d6d6d6"></div>
<div style="left:248px;top:458px;width:1px;height:26px;background:#d6d6d6"></div>
<div style="left:328px;top:458px;width:1px;height:26px;background:#d6d6d6"></div>
<div style="left:448px;top:458px;width:1px;height:26px;background:#d6d6d6"></div>
<div style="left:568px;top:458px;width:1px;height:26px;background:#d6d6d6"></div>
<div style="left:688px;top:458px;width:1px;height:26px;background:#d6d6d6"></div>
<div style="left:838px;top:458px;width:1px;height:26px;background:#d6d6d6"></div>
<div class="t" style="left:22.70px;top:465.94px;font-size:12px;color:#111;transform:scaleX(0.9100);transform-origin:0 0;">3B</div>
<div class="t" style="left:311.84px;top:465.94px;font-size:12px;color:#111;transform:scaleX(0.9100);transform-origin:0 0;">15</div>
<div class="t" style="left:671.84px;top:465.94px;font-size:12px;color:#111;transform:scaleX(0.9100);transform-origin:0 0;">0đ</div>
<svg style="left:690px;top:460.00px" width="136.5" height="22.8" viewBox="0 0 136.5 22.8">
<path d="M0 11.4 L7.5 0 H133.5 Q136.5 0 136.5 3 V19.8 Q136.5 22.8 133.5 22.8 H7.5Z" fill="#ff7300"/>
<circle cx="8" cy="11.4" r="2.6" fill="#f6e8ee"/></svg>
<div class="t" style="left:708.50px;top:465.94px;font-size:12px;color:#fff;transform:scaleX(0.9700);transform-origin:0 0;">Chưa thu</div>
<svg style="left:840px;top:460.00px" width="136.5" height="22.8" viewBox="0 0 136.5 22.8">
<path d="M0 11.4 L7.5 0 H133.5 Q136.5 0 136.5 3 V19.8 Q136.5 22.8 133.5 22.8 H7.5Z" fill="#a1a1a1"/>
<circle cx="8" cy="11.4" r="2.6" fill="#f6e8ee"/></svg>
<div class="t" style="left:856.40px;top:465.94px;font-size:12px;color:#fff;transform:scaleX(0.9700);transform-origin:0 0;">Chưa cấp đủ</div>
<div style="left:17px;top:485px;width:973px;height:28px;background:#fff;border-left:1px solid #d3d3d3;border-right:1px solid #d3d3d3;border-bottom:1px solid #d6d6d6"></div>
<div style="left:248px;top:485px;width:1px;height:27px;background:#d6d6d6"></div>
<div style="left:328px;top:485px;width:1px;height:27px;background:#d6d6d6"></div>
<div style="left:448px;top:485px;width:1px;height:27px;background:#d6d6d6"></div>
<div style="left:568px;top:485px;width:1px;height:27px;background:#d6d6d6"></div>
<div style="left:688px;top:485px;width:1px;height:27px;background:#d6d6d6"></div>
<div style="left:838px;top:485px;width:1px;height:27px;background:#d6d6d6"></div>
<div class="t" style="left:22.70px;top:492.94px;font-size:12px;color:#111;transform:scaleX(0.9100);transform-origin:0 0;">3C</div>
<div class="t" style="left:311.84px;top:492.94px;font-size:12px;color:#111;transform:scaleX(0.9100);transform-origin:0 0;">25</div>
<div class="t" style="left:671.84px;top:492.94px;font-size:12px;color:#111;transform:scaleX(0.9100);transform-origin:0 0;">0đ</div>
<svg style="left:690px;top:487.00px" width="136.5" height="22.8" viewBox="0 0 136.5 22.8">
<path d="M0 11.4 L7.5 0 H133.5 Q136.5 0 136.5 3 V19.8 Q136.5 22.8 133.5 22.8 H7.5Z" fill="#ff7300"/>
<circle cx="8" cy="11.4" r="2.6" fill="#f6e8ee"/></svg>
<div class="t" style="left:708.50px;top:492.94px;font-size:12px;color:#fff;transform:scaleX(0.9700);transform-origin:0 0;">Chưa thu</div>
<svg style="left:840px;top:487.00px" width="136.5" height="22.8" viewBox="0 0 136.5 22.8">
<path d="M0 11.4 L7.5 0 H133.5 Q136.5 0 136.5 3 V19.8 Q136.5 22.8 133.5 22.8 H7.5Z" fill="#a1a1a1"/>
<circle cx="8" cy="11.4" r="2.6" fill="#f6e8ee"/></svg>
<div class="t" style="left:856.40px;top:492.94px;font-size:12px;color:#fff;transform:scaleX(0.9700);transform-origin:0 0;">Chưa cấp đủ</div>
<div style="left:17px;top:513px;width:973px;height:27px;background:#fff;border-left:1px solid #d3d3d3;border-right:1px solid #d3d3d3;border-bottom:1px solid #d6d6d6"></div>
<div style="left:248px;top:513px;width:1px;height:26px;background:#d6d6d6"></div>
<div style="left:328px;top:513px;width:1px;height:26px;background:#d6d6d6"></div>
<div style="left:448px;top:513px;width:1px;height:26px;background:#d6d6d6"></div>
<div style="left:568px;top:513px;width:1px;height:26px;background:#d6d6d6"></div>
<div style="left:688px;top:513px;width:1px;height:26px;background:#d6d6d6"></div>
<div style="left:838px;top:513px;width:1px;height:26px;background:#d6d6d6"></div>
<div class="t" style="left:22.70px;top:520.94px;font-size:12px;color:#111;transform:scaleX(0.9100);transform-origin:0 0;">3D</div>
<div class="t" style="left:312.65px;top:520.94px;font-size:12px;color:#111;transform:scaleX(0.9100);transform-origin:0 0;">11</div>
<div class="t" style="left:671.84px;top:520.94px;font-size:12px;color:#111;transform:scaleX(0.9100);transform-origin:0 0;">0đ</div>
<svg style="left:690px;top:515.00px" width="136.5" height="22.8" viewBox="0 0 136.5 22.8">
<path d="M0 11.4 L7.5 0 H133.5 Q136.5 0 136.5 3 V19.8 Q136.5 22.8 133.5 22.8 H7.5Z" fill="#36a74a"/>
<circle cx="8" cy="11.4" r="2.6" fill="#f6e8ee"/></svg>
<div class="t" style="left:708.50px;top:520.94px;font-size:12px;color:#fff;transform:scaleX(0.9700);transform-origin:0 0;">Đã thu đủ</div>
<svg style="left:840px;top:515.00px" width="136.5" height="22.8" viewBox="0 0 136.5 22.8">
<path d="M0 11.4 L7.5 0 H133.5 Q136.5 0 136.5 3 V19.8 Q136.5 22.8 133.5 22.8 H7.5Z" fill="#a1a1a1"/>
<circle cx="8" cy="11.4" r="2.6" fill="#f6e8ee"/></svg>
<div class="t" style="left:856.40px;top:520.94px;font-size:12px;color:#fff;transform:scaleX(0.9700);transform-origin:0 0;">Chưa cấp đủ</div>
<div style="left:17px;top:540px;width:973px;height:28px;background:#fff;border-left:1px solid #d3d3d3;border-right:1px solid #d3d3d3;border-bottom:1px solid #d6d6d6"></div>
<div style="left:248px;top:540px;width:1px;height:27px;background:#d6d6d6"></div>
<div style="left:328px;top:540px;width:1px;height:27px;background:#d6d6d6"></div>
<div style="left:448px;top:540px;width:1px;height:27px;background:#d6d6d6"></div>
<div style="left:568px;top:540px;width:1px;height:27px;background:#d6d6d6"></div>
<div style="left:688px;top:540px;width:1px;height:27px;background:#d6d6d6"></div>
<div style="left:838px;top:540px;width:1px;height:27px;background:#d6d6d6"></div>
<div class="t" style="left:22.70px;top:547.94px;font-size:12px;color:#111;transform:scaleX(0.9100);transform-origin:0 0;">4A</div>
<div class="t" style="left:311.84px;top:547.94px;font-size:12px;color:#111;transform:scaleX(0.9100);transform-origin:0 0;">33</div>
<div class="t" style="left:671.84px;top:547.94px;font-size:12px;color:#111;transform:scaleX(0.9100);transform-origin:0 0;">0đ</div>
<svg style="left:690px;top:542.00px" width="136.5" height="22.8" viewBox="0 0 136.5 22.8">
<path d="M0 11.4 L7.5 0 H133.5 Q136.5 0 136.5 3 V19.8 Q136.5 22.8 133.5 22.8 H7.5Z" fill="#36a74a"/>
<circle cx="8" cy="11.4" r="2.6" fill="#f6e8ee"/></svg>
<div class="t" style="left:708.50px;top:547.94px;font-size:12px;color:#fff;transform:scaleX(0.9700);transform-origin:0 0;">Đã thu đủ</div>
<svg style="left:840px;top:542.00px" width="136.5" height="22.8" viewBox="0 0 136.5 22.8">
<path d="M0 11.4 L7.5 0 H133.5 Q136.5 0 136.5 3 V19.8 Q136.5 22.8 133.5 22.8 H7.5Z" fill="#a1a1a1"/>
<circle cx="8" cy="11.4" r="2.6" fill="#f6e8ee"/></svg>
<div class="t" style="left:856.40px;top:547.94px;font-size:12px;color:#fff;transform:scaleX(0.9700);transform-origin:0 0;">Chưa cấp đủ</div>
<div style="left:17px;top:568px;width:973px;height:27px;background:#fff;border-left:1px solid #d3d3d3;border-right:1px solid #d3d3d3;border-bottom:1px solid #d6d6d6"></div>
<div style="left:248px;top:568px;width:1px;height:26px;background:#d6d6d6"></div>
<div style="left:328px;top:568px;width:1px;height:26px;background:#d6d6d6"></div>
<div style="left:448px;top:568px;width:1px;height:26px;background:#d6d6d6"></div>
<div style="left:568px;top:568px;width:1px;height:26px;background:#d6d6d6"></div>
<div style="left:688px;top:568px;width:1px;height:26px;background:#d6d6d6"></div>
<div style="left:838px;top:568px;width:1px;height:26px;background:#d6d6d6"></div>
<div class="t" style="left:22.70px;top:575.94px;font-size:12px;color:#111;transform:scaleX(0.9100);transform-origin:0 0;">4B</div>
<div class="t" style="left:311.84px;top:575.94px;font-size:12px;color:#111;transform:scaleX(0.9100);transform-origin:0 0;">13</div>
<div class="t" style="left:671.84px;top:575.94px;font-size:12px;color:#111;transform:scaleX(0.9100);transform-origin:0 0;">0đ</div>
<svg style="left:690px;top:570.00px" width="136.5" height="22.8" viewBox="0 0 136.5 22.8">
<path d="M0 11.4 L7.5 0 H133.5 Q136.5 0 136.5 3 V19.8 Q136.5 22.8 133.5 22.8 H7.5Z" fill="#36a74a"/>
<circle cx="8" cy="11.4" r="2.6" fill="#f6e8ee"/></svg>
<div class="t" style="left:708.50px;top:575.94px;font-size:12px;color:#fff;transform:scaleX(0.9700);transform-origin:0 0;">Đã thu đủ</div>
<svg style="left:840px;top:570.00px" width="136.5" height="22.8" viewBox="0 0 136.5 22.8">
<path d="M0 11.4 L7.5 0 H133.5 Q136.5 0 136.5 3 V19.8 Q136.5 22.8 133.5 22.8 H7.5Z" fill="#a1a1a1"/>
<circle cx="8" cy="11.4" r="2.6" fill="#f6e8ee"/></svg>
<div class="t" style="left:856.40px;top:575.94px;font-size:12px;color:#fff;transform:scaleX(0.9700);transform-origin:0 0;">Chưa cấp đủ</div>
<div style="left:17px;top:595px;width:973px;height:28px;background:#fff;border-left:1px solid #d3d3d3;border-right:1px solid #d3d3d3;border-bottom:1px solid #d6d6d6"></div>
<div style="left:248px;top:595px;width:1px;height:27px;background:#d6d6d6"></div>
<div style="left:328px;top:595px;width:1px;height:27px;background:#d6d6d6"></div>
<div style="left:448px;top:595px;width:1px;height:27px;background:#d6d6d6"></div>
<div style="left:568px;top:595px;width:1px;height:27px;background:#d6d6d6"></div>
<div style="left:688px;top:595px;width:1px;height:27px;background:#d6d6d6"></div>
<div style="left:838px;top:595px;width:1px;height:27px;background:#d6d6d6"></div>
<div class="t" style="left:22.70px;top:602.94px;font-size:12px;color:#111;transform:scaleX(0.9100);transform-origin:0 0;">4C</div>
<div class="t" style="left:311.84px;top:602.94px;font-size:12px;color:#111;transform:scaleX(0.9100);transform-origin:0 0;">17</div>
<div class="t" style="left:389.34px;top:602.94px;font-size:12px;color:#111;transform:scaleX(0.9100);transform-origin:0 0;">7.820.000đ</div>
<div class="t" style="left:509.34px;top:602.94px;font-size:12px;color:#111;transform:scaleX(0.9100);transform-origin:0 0;">7.820.000đ</div>
<div class="t" style="left:671.84px;top:602.94px;font-size:12px;color:#111;transform:scaleX(0.9100);transform-origin:0 0;">0đ</div>
<svg style="left:690px;top:597.00px" width="136.5" height="22.8" viewBox="0 0 136.5 22.8">
<path d="M0 11.4 L7.5 0 H133.5 Q136.5 0 136.5 3 V19.8 Q136.5 22.8 133.5 22.8 H7.5Z" fill="#36a74a"/>
<circle cx="8" cy="11.4" r="2.6" fill="#f6e8ee"/></svg>
<div class="t" style="left:708.50px;top:602.94px;font-size:12px;color:#fff;transform:scaleX(0.9700);transform-origin:0 0;">Đã thu đủ</div>
<svg style="left:840px;top:597.00px" width="136.5" height="22.8" viewBox="0 0 136.5 22.8">
<path d="M0 11.4 L7.5 0 H133.5 Q136.5 0 136.5 3 V19.8 Q136.5 22.8 133.5 22.8 H7.5Z" fill="#ff7300"/>
<circle cx="8" cy="11.4" r="2.6" fill="#f6e8ee"/></svg>
<div class="t" style="left:856.40px;top:602.94px;font-size:12px;color:#fff;transform:scaleX(0.9700);transform-origin:0 0;">Chưa cấp</div>
<div style="left:17px;top:623px;width:973px;height:27px;background:#fff;border-left:1px solid #d3d3d3;border-right:1px solid #d3d3d3;border-bottom:1px solid #d6d6d6"></div>
<div style="left:248px;top:623px;width:1px;height:26px;background:#d6d6d6"></div>
<div style="left:328px;top:623px;width:1px;height:26px;background:#d6d6d6"></div>
<div style="left:448px;top:623px;width:1px;height:26px;background:#d6d6d6"></div>
<div style="left:568px;top:623px;width:1px;height:26px;background:#d6d6d6"></div>
<div style="left:688px;top:623px;width:1px;height:26px;background:#d6d6d6"></div>
<div style="left:838px;top:623px;width:1px;height:26px;background:#d6d6d6"></div>
<div class="t" style="left:22.70px;top:630.94px;font-size:12px;color:#111;transform:scaleX(0.9100);transform-origin:0 0;">5A</div>
<div class="t" style="left:311.84px;top:630.94px;font-size:12px;color:#111;transform:scaleX(0.9100);transform-origin:0 0;">31</div>
<div class="t" style="left:383.27px;top:630.94px;font-size:12px;color:#111;transform:scaleX(0.9100);transform-origin:0 0;">14.260.000đ</div>
<div class="t" style="left:503.27px;top:630.94px;font-size:12px;color:#111;transform:scaleX(0.9100);transform-origin:0 0;">12.880.000đ</div>
<div class="t" style="left:629.34px;top:630.94px;font-size:12px;color:#111;transform:scaleX(0.9100);transform-origin:0 0;">1.380.000đ</div>
<svg style="left:690px;top:625.00px" width="136.5" height="22.8" viewBox="0 0 136.5 22.8">
<path d="M0 11.4 L7.5 0 H133.5 Q136.5 0 136.5 3 V19.8 Q136.5 22.8 133.5 22.8 H7.5Z" fill="#a1a1a1"/>
<circle cx="8" cy="11.4" r="2.6" fill="#f6e8ee"/></svg>
<div class="t" style="left:708.50px;top:630.94px;font-size:12px;color:#fff;transform:scaleX(0.9700);transform-origin:0 0;">Chưa thu đủ</div>
<svg style="left:840px;top:625.00px" width="136.5" height="22.8" viewBox="0 0 136.5 22.8">
<path d="M0 11.4 L7.5 0 H133.5 Q136.5 0 136.5 3 V19.8 Q136.5 22.8 133.5 22.8 H7.5Z" fill="#a1a1a1"/>
<circle cx="8" cy="11.4" r="2.6" fill="#f6e8ee"/></svg>
<div class="t" style="left:856.40px;top:630.94px;font-size:12px;color:#fff;transform:scaleX(0.9700);transform-origin:0 0;">Chưa cấp đủ</div>
<div style="left:17px;top:650px;width:973px;height:28px;background:#fff;border-left:1px solid #d3d3d3;border-right:1px solid #d3d3d3;border-bottom:1px solid #d6d6d6"></div>
<div style="left:248px;top:650px;width:1px;height:27px;background:#d6d6d6"></div>
<div style="left:328px;top:650px;width:1px;height:27px;background:#d6d6d6"></div>
<div style="left:448px;top:650px;width:1px;height:27px;background:#d6d6d6"></div>
<div style="left:568px;top:650px;width:1px;height:27px;background:#d6d6d6"></div>
<div style="left:688px;top:650px;width:1px;height:27px;background:#d6d6d6"></div>
<div style="left:838px;top:650px;width:1px;height:27px;background:#d6d6d6"></div>
<div class="t" style="left:22.70px;top:657.94px;font-size:12px;color:#111;transform:scaleX(0.9100);transform-origin:0 0;">5B</div>
<div class="t" style="left:311.84px;top:657.94px;font-size:12px;color:#111;transform:scaleX(0.9100);transform-origin:0 0;">18</div>
<div class="t" style="left:389.34px;top:657.94px;font-size:12px;color:#111;transform:scaleX(0.9100);transform-origin:0 0;">8.280.000đ</div>
<div class="t" style="left:551.84px;top:657.94px;font-size:12px;color:#111;transform:scaleX(0.9100);transform-origin:0 0;">0đ</div>
<div class="t" style="left:629.34px;top:657.94px;font-size:12px;color:#111;transform:scaleX(0.9100);transform-origin:0 0;">8.280.000đ</div>
<svg style="left:690px;top:652.00px" width="136.5" height="22.8" viewBox="0 0 136.5 22.8">
<path d="M0 11.4 L7.5 0 H133.5 Q136.5 0 136.5 3 V19.8 Q136.5 22.8 133.5 22.8 H7.5Z" fill="#ff7300"/>
<circle cx="8" cy="11.4" r="2.6" fill="#f6e8ee"/></svg>
<div class="t" style="left:708.50px;top:657.94px;font-size:12px;color:#fff;transform:scaleX(0.9700);transform-origin:0 0;">Chưa thu</div>
<svg style="left:840px;top:652.00px" width="136.5" height="22.8" viewBox="0 0 136.5 22.8">
<path d="M0 11.4 L7.5 0 H133.5 Q136.5 0 136.5 3 V19.8 Q136.5 22.8 133.5 22.8 H7.5Z" fill="#ff7300"/>
<circle cx="8" cy="11.4" r="2.6" fill="#f6e8ee"/></svg>
<div class="t" style="left:856.40px;top:657.94px;font-size:12px;color:#fff;transform:scaleX(0.9700);transform-origin:0 0;">Chưa cấp</div>
<div style="left:17px;top:678px;width:973px;height:27px;background:#fff;border-left:1px solid #d3d3d3;border-right:1px solid #d3d3d3;border-bottom:1px solid #d6d6d6"></div>
<div style="left:248px;top:678px;width:1px;height:26px;background:#d6d6d6"></div>
<div style="left:328px;top:678px;width:1px;height:26px;background:#d6d6d6"></div>
<div style="left:448px;top:678px;width:1px;height:26px;background:#d6d6d6"></div>
<div style="left:568px;top:678px;width:1px;height:26px;background:#d6d6d6"></div>
<div style="left:688px;top:678px;width:1px;height:26px;background:#d6d6d6"></div>
<div style="left:838px;top:678px;width:1px;height:26px;background:#d6d6d6"></div>
<div class="t" style="left:22.70px;top:685.94px;font-size:12px;color:#111;transform:scaleX(0.9100);transform-origin:0 0;">5C</div>
<div class="t" style="left:311.84px;top:685.94px;font-size:12px;color:#111;transform:scaleX(0.9100);transform-origin:0 0;">19</div>
<div class="t" style="left:389.34px;top:685.94px;font-size:12px;color:#111;transform:scaleX(0.9100);transform-origin:0 0;">8.740.000đ</div>
<div class="t" style="left:551.84px;top:685.94px;font-size:12px;color:#111;transform:scaleX(0.9100);transform-origin:0 0;">0đ</div>
<div class="t" style="left:629.34px;top:685.94px;font-size:12px;color:#111;transform:scaleX(0.9100);transform-origin:0 0;">8.740.000đ</div>
<svg style="left:690px;top:680.00px" width="136.5" height="22.8" viewBox="0 0 136.5 22.8">
<path d="M0 11.4 L7.5 0 H133.5 Q136.5 0 136.5 3 V19.8 Q136.5 22.8 133.5 22.8 H7.5Z" fill="#ff7300"/>
<circle cx="8" cy="11.4" r="2.6" fill="#f6e8ee"/></svg>
<div class="t" style="left:708.50px;top:685.94px;font-size:12px;color:#fff;transform:scaleX(0.9700);transform-origin:0 0;">Chưa thu</div>
<svg style="left:840px;top:680.00px" width="136.5" height="22.8" viewBox="0 0 136.5 22.8">
<path d="M0 11.4 L7.5 0 H133.5 Q136.5 0 136.5 3 V19.8 Q136.5 22.8 133.5 22.8 H7.5Z" fill="#ff7300"/>
<circle cx="8" cy="11.4" r="2.6" fill="#f6e8ee"/></svg>
<div class="t" style="left:856.40px;top:685.94px;font-size:12px;color:#fff;transform:scaleX(0.9700);transform-origin:0 0;">Chưa cấp</div>
<div style="left:17px;top:705px;width:973px;height:28px;background:#fff;border-left:1px solid #d3d3d3;border-right:1px solid #d3d3d3;border-bottom:1px solid #d6d6d6"></div>
<div style="left:248px;top:705px;width:1px;height:27px;background:#d6d6d6"></div>
<div style="left:328px;top:705px;width:1px;height:27px;background:#d6d6d6"></div>
<div style="left:448px;top:705px;width:1px;height:27px;background:#d6d6d6"></div>
<div style="left:568px;top:705px;width:1px;height:27px;background:#d6d6d6"></div>
<div style="left:688px;top:705px;width:1px;height:27px;background:#d6d6d6"></div>
<div style="left:838px;top:705px;width:1px;height:27px;background:#d6d6d6"></div>
<div class="t" style="left:22.70px;top:712.94px;font-size:12px;color:#111;transform:scaleX(0.9100);transform-origin:0 0;">5D</div>
<div class="t" style="left:311.84px;top:712.94px;font-size:12px;color:#111;transform:scaleX(0.9100);transform-origin:0 0;">20</div>
<div class="t" style="left:389.34px;top:712.94px;font-size:12px;color:#111;transform:scaleX(0.9100);transform-origin:0 0;">3.200.000đ</div>
<div class="t" style="left:509.34px;top:712.94px;font-size:12px;color:#111;transform:scaleX(0.9100);transform-origin:0 0;">3.040.000đ</div>
<div class="t" style="left:638.44px;top:712.94px;font-size:12px;color:#111;transform:scaleX(0.9100);transform-origin:0 0;">160.000đ</div>
<svg style="left:690px;top:707.00px" width="136.5" height="22.8" viewBox="0 0 136.5 22.8">
<path d="M0 11.4 L7.5 0 H133.5 Q136.5 0 136.5 3 V19.8 Q136.5 22.8 133.5 22.8 H7.5Z" fill="#a1a1a1"/>
<circle cx="8" cy="11.4" r="2.6" fill="#f6e8ee"/></svg>
<div class="t" style="left:708.50px;top:712.94px;font-size:12px;color:#fff;transform:scaleX(0.9700);transform-origin:0 0;">Chưa thu đủ</div>
<svg style="left:840px;top:707.00px" width="136.5" height="22.8" viewBox="0 0 136.5 22.8">
<path d="M0 11.4 L7.5 0 H133.5 Q136.5 0 136.5 3 V19.8 Q136.5 22.8 133.5 22.8 H7.5Z" fill="#a1a1a1"/>
<circle cx="8" cy="11.4" r="2.6" fill="#f6e8ee"/></svg>
<div class="t" style="left:856.40px;top:712.94px;font-size:12px;color:#fff;transform:scaleX(0.9700);transform-origin:0 0;">Chưa cấp đủ</div>
<div style="left:18px;top:237px;width:971px;height:1px;border-top:1px dotted #e6cc98"></div>
<div style="left:17px;top:733px;width:973px;height:7px;border-left:1px solid #d3d3d3;border-right:1px solid #d3d3d3"></div>
<div style="left:206px;top:156px;width:272px;height:247px;background:#f0f0f0;border:1px solid #a7c6e6;box-shadow:2px 2px 3px rgba(0,0,0,0.25)"></div>
<div style="left:233px;top:157px;width:1px;height:244px;background:#e0e0e0"></div><div style="left:234px;top:157px;width:1px;height:244px;background:#fff"></div>
<svg style="left:212px;top:162px" width="17" height="17" viewBox="0 0 17 17" opacity="1">
<defs><linearGradient id="pb212162" x1="0" y1="0" x2="1" y2="0.2"><stop offset="0" stop-color="#bdb8ec"/><stop offset="0.4" stop-color="#e2defc"/><stop offset="1" stop-color="#c2bdf0"/></linearGradient>
<linearGradient id="pp212162" x1="0" y1="0" x2="0" y2="1"><stop offset="0" stop-color="#8ad6fa"/><stop offset="1" stop-color="#3a9ee8"/></linearGradient></defs>
<path d="M1.1 3.4 L7.9 1.9 L9.4 5.5 L2.3 7.4Z" fill="url(#pp212162)" stroke="#3a94e0" stroke-width="0.6"/>
<path d="M0.6 9.8 C0.8 8.8 1.8 8.4 3 8.3 L12 6.6 C13.8 6.3 15 7.8 15 9.6 L14.8 12 C14.7 13 14 13.5 13 13.8 L3.5 15.6 C1.6 15.9 0.3 14.8 0.3 13.2Z" fill="url(#pb212162)" stroke="#716bb0" stroke-width="1.1"/>
<path d="M5.2 8 C6 10 6.3 12.5 6.1 15" fill="none" stroke="#f6f4ff" stroke-width="0.9"/><circle cx="9.4" cy="10.5" r="0.75" fill="#5a549c"/></svg>
<div class="t" style="left:240.40px;top:166.04px;font-size:12px;color:#222;transform:scaleX(0.9752);transform-origin:0 0;">Danh sách thu tiền</div>
<svg style="left:212px;top:186px" width="17" height="17" viewBox="0 0 17 17" opacity="0.45">
<defs><linearGradient id="pb212186" x1="0" y1="0" x2="1" y2="0.2"><stop offset="0" stop-color="#bdb8ec"/><stop offset="0.4" stop-color="#e2defc"/><stop offset="1" stop-color="#c2bdf0"/></linearGradient>
<linearGradient id="pp212186" x1="0" y1="0" x2="0" y2="1"><stop offset="0" stop-color="#8ad6fa"/><stop offset="1" stop-color="#3a9ee8"/></linearGradient></defs>
<path d="M1.1 3.4 L7.9 1.9 L9.4 5.5 L2.3 7.4Z" fill="url(#pp212186)" stroke="#3a94e0" stroke-width="0.6"/>
<path d="M0.6 9.8 C0.8 8.8 1.8 8.4 3 8.3 L12 6.6 C13.8 6.3 15 7.8 15 9.6 L14.8 12 C14.7 13 14 13.5 13 13.8 L3.5 15.6 C1.6 15.9 0.3 14.8 0.3 13.2Z" fill="url(#pb212186)" stroke="#716bb0" stroke-width="1.1"/>
<path d="M5.2 8 C6 10 6.3 12.5 6.1 15" fill="none" stroke="#f6f4ff" stroke-width="0.9"/><circle cx="9.4" cy="10.5" r="0.75" fill="#5a549c"/></svg>
<div class="t" style="left:240.40px;top:190.04px;font-size:12px;color:#8a8a8a;transform:scaleX(0.9922);transform-origin:0 0;">Thông báo thu tiền</div>
<svg style="left:212px;top:210px" width="17" height="17" viewBox="0 0 17 17" opacity="1">
<defs><linearGradient id="pb212210" x1="0" y1="0" x2="1" y2="0.2"><stop offset="0" stop-color="#bdb8ec"/><stop offset="0.4" stop-color="#e2defc"/><stop offset="1" stop-color="#c2bdf0"/></linearGradient>
<linearGradient id="pp212210" x1="0" y1="0" x2="0" y2="1"><stop offset="0" stop-color="#8ad6fa"/><stop offset="1" stop-color="#3a9ee8"/></linearGradient></defs>
<path d="M1.1 3.4 L7.9 1.9 L9.4 5.5 L2.3 7.4Z" fill="url(#pp212210)" stroke="#3a94e0" stroke-width="0.6"/>
<path d="M0.6 9.8 C0.8 8.8 1.8 8.4 3 8.3 L12 6.6 C13.8 6.3 15 7.8 15 9.6 L14.8 12 C14.7 13 14 13.5 13 13.8 L3.5 15.6 C1.6 15.9 0.3 14.8 0.3 13.2Z" fill="url(#pb212210)" stroke="#716bb0" stroke-width="1.1"/>
<path d="M5.2 8 C6 10 6.3 12.5 6.1 15" fill="none" stroke="#f6f4ff" stroke-width="0.9"/><circle cx="9.4" cy="10.5" r="0.75" fill="#5a549c"/></svg>
<div class="t" style="left:240.40px;top:214.04px;font-size:12px;color:#222;transform:scaleX(0.9919);transform-origin:0 0;">Biên lai thu tiền</div>
<svg style="left:212px;top:234px" width="17" height="17" viewBox="0 0 17 17" opacity="1">
<defs><linearGradient id="pb212234" x1="0" y1="0" x2="1" y2="0.2"><stop offset="0" stop-color="#bdb8ec"/><stop offset="0.4" stop-color="#e2defc"/><stop offset="1" stop-color="#c2bdf0"/></linearGradient>
<linearGradient id="pp212234" x1="0" y1="0" x2="0" y2="1"><stop offset="0" stop-color="#8ad6fa"/><stop offset="1" stop-color="#3a9ee8"/></linearGradient></defs>
<path d="M1.1 3.4 L7.9 1.9 L9.4 5.5 L2.3 7.4Z" fill="url(#pp212234)" stroke="#3a94e0" stroke-width="0.6"/>
<path d="M0.6 9.8 C0.8 8.8 1.8 8.4 3 8.3 L12 6.6 C13.8 6.3 15 7.8 15 9.6 L14.8 12 C14.7 13 14 13.5 13 13.8 L3.5 15.6 C1.6 15.9 0.3 14.8 0.3 13.2Z" fill="url(#pb212234)" stroke="#716bb0" stroke-width="1.1"/>
<path d="M5.2 8 C6 10 6.3 12.5 6.1 15" fill="none" stroke="#f6f4ff" stroke-width="0.9"/><circle cx="9.4" cy="10.5" r="0.75" fill="#5a549c"/></svg>
<div class="t" style="left:240.40px;top:238.04px;font-size:12px;color:#222;transform:scaleX(0.9575);transform-origin:0 0;">Hóa đơn</div>
<svg style="left:212px;top:258px" width="17" height="17" viewBox="0 0 17 17" opacity="1">
<defs><linearGradient id="pb212258" x1="0" y1="0" x2="1" y2="0.2"><stop offset="0" stop-color="#bdb8ec"/><stop offset="0.4" stop-color="#e2defc"/><stop offset="1" stop-color="#c2bdf0"/></linearGradient>
<linearGradient id="pp212258" x1="0" y1="0" x2="0" y2="1"><stop offset="0" stop-color="#8ad6fa"/><stop offset="1" stop-color="#3a9ee8"/></linearGradient></defs>
<path d="M1.1 3.4 L7.9 1.9 L9.4 5.5 L2.3 7.4Z" fill="url(#pp212258)" stroke="#3a94e0" stroke-width="0.6"/>
<path d="M0.6 9.8 C0.8 8.8 1.8 8.4 3 8.3 L12 6.6 C13.8 6.3 15 7.8 15 9.6 L14.8 12 C14.7 13 14 13.5 13 13.8 L3.5 15.6 C1.6 15.9 0.3 14.8 0.3 13.2Z" fill="url(#pb212258)" stroke="#716bb0" stroke-width="1.1"/>
<path d="M5.2 8 C6 10 6.3 12.5 6.1 15" fill="none" stroke="#f6f4ff" stroke-width="0.9"/><circle cx="9.4" cy="10.5" r="0.75" fill="#5a549c"/></svg>
<div class="t" style="left:240.40px;top:262.04px;font-size:12px;color:#222;transform:scaleX(0.9693);transform-origin:0 0;">Danh sách thu tiền(Chi tiết các khoản thu)</div>
<svg style="left:212px;top:282px" width="17" height="17" viewBox="0 0 17 17" opacity="1">
<defs><linearGradient id="pb212282" x1="0" y1="0" x2="1" y2="0.2"><stop offset="0" stop-color="#bdb8ec"/><stop offset="0.4" stop-color="#e2defc"/><stop offset="1" stop-color="#c2bdf0"/></linearGradient>
<linearGradient id="pp212282" x1="0" y1="0" x2="0" y2="1"><stop offset="0" stop-color="#8ad6fa"/><stop offset="1" stop-color="#3a9ee8"/></linearGradient></defs>
<path d="M1.1 3.4 L7.9 1.9 L9.4 5.5 L2.3 7.4Z" fill="url(#pp212282)" stroke="#3a94e0" stroke-width="0.6"/>
<path d="M0.6 9.8 C0.8 8.8 1.8 8.4 3 8.3 L12 6.6 C13.8 6.3 15 7.8 15 9.6 L14.8 12 C14.7 13 14 13.5 13 13.8 L3.5 15.6 C1.6 15.9 0.3 14.8 0.3 13.2Z" fill="url(#pb212282)" stroke="#716bb0" stroke-width="1.1"/>
<path d="M5.2 8 C6 10 6.3 12.5 6.1 15" fill="none" stroke="#f6f4ff" stroke-width="0.9"/><circle cx="9.4" cy="10.5" r="0.75" fill="#5a549c"/></svg>
<div class="t" style="left:240.40px;top:286.04px;font-size:12px;color:#222;transform:scaleX(0.9618);transform-origin:0 0;">Danh sách học sinh chưa nộp tiền</div>
<svg style="left:212px;top:306px" width="17" height="17" viewBox="0 0 17 17" opacity="1">
<defs><linearGradient id="pb212306" x1="0" y1="0" x2="1" y2="0.2"><stop offset="0" stop-color="#bdb8ec"/><stop offset="0.4" stop-color="#e2defc"/><stop offset="1" stop-color="#c2bdf0"/></linearGradient>
<linearGradient id="pp212306" x1="0" y1="0" x2="0" y2="1"><stop offset="0" stop-color="#8ad6fa"/><stop offset="1" stop-color="#3a9ee8"/></linearGradient></defs>
<path d="M1.1 3.4 L7.9 1.9 L9.4 5.5 L2.3 7.4Z" fill="url(#pp212306)" stroke="#3a94e0" stroke-width="0.6"/>
<path d="M0.6 9.8 C0.8 8.8 1.8 8.4 3 8.3 L12 6.6 C13.8 6.3 15 7.8 15 9.6 L14.8 12 C14.7 13 14 13.5 13 13.8 L3.5 15.6 C1.6 15.9 0.3 14.8 0.3 13.2Z" fill="url(#pb212306)" stroke="#716bb0" stroke-width="1.1"/>
<path d="M5.2 8 C6 10 6.3 12.5 6.1 15" fill="none" stroke="#f6f4ff" stroke-width="0.9"/><circle cx="9.4" cy="10.5" r="0.75" fill="#5a549c"/></svg>
<div class="t" style="left:240.40px;top:310.04px;font-size:12px;color:#222;transform:scaleX(0.9795);transform-origin:0 0;">Sổ thu và thanh toán</div>
<svg style="left:212px;top:330px" width="17" height="17" viewBox="0 0 17 17" opacity="1">
<defs><linearGradient id="pb212330" x1="0" y1="0" x2="1" y2="0.2"><stop offset="0" stop-color="#bdb8ec"/><stop offset="0.4" stop-color="#e2defc"/><stop offset="1" stop-color="#c2bdf0"/></linearGradient>
<linearGradient id="pp212330" x1="0" y1="0" x2="0" y2="1"><stop offset="0" stop-color="#8ad6fa"/><stop offset="1" stop-color="#3a9ee8"/></linearGradient></defs>
<path d="M1.1 3.4 L7.9 1.9 L9.4 5.5 L2.3 7.4Z" fill="url(#pp212330)" stroke="#3a94e0" stroke-width="0.6"/>
<path d="M0.6 9.8 C0.8 8.8 1.8 8.4 3 8.3 L12 6.6 C13.8 6.3 15 7.8 15 9.6 L14.8 12 C14.7 13 14 13.5 13 13.8 L3.5 15.6 C1.6 15.9 0.3 14.8 0.3 13.2Z" fill="url(#pb212330)" stroke="#716bb0" stroke-width="1.1"/>
<path d="M5.2 8 C6 10 6.3 12.5 6.1 15" fill="none" stroke="#f6f4ff" stroke-width="0.9"/><circle cx="9.4" cy="10.5" r="0.75" fill="#5a549c"/></svg>
<div class="t" style="left:240.40px;top:334.04px;font-size:12px;color:#222;transform:scaleX(0.9820);transform-origin:0 0;">Nhật ký thu bàn giao</div>
<svg style="left:212px;top:354px" width="17" height="17" viewBox="0 0 17 17" opacity="1">
<defs><linearGradient id="pb212354" x1="0" y1="0" x2="1" y2="0.2"><stop offset="0" stop-color="#bdb8ec"/><stop offset="0.4" stop-color="#e2defc"/><stop offset="1" stop-color="#c2bdf0"/></linearGradient>
<linearGradient id="pp212354" x1="0" y1="0" x2="0" y2="1"><stop offset="0" stop-color="#8ad6fa"/><stop offset="1" stop-color="#3a9ee8"/></linearGradient></defs>
<path d="M1.1 3.4 L7.9 1.9 L9.4 5.5 L2.3 7.4Z" fill="url(#pp212354)" stroke="#3a94e0" stroke-width="0.6"/>
<path d="M0.6 9.8 C0.8 8.8 1.8 8.4 3 8.3 L12 6.6 C13.8 6.3 15 7.8 15 9.6 L14.8 12 C14.7 13 14 13.5 13 13.8 L3.5 15.6 C1.6 15.9 0.3 14.8 0.3 13.2Z" fill="url(#pb212354)" stroke="#716bb0" stroke-width="1.1"/>
<path d="M5.2 8 C6 10 6.3 12.5 6.1 15" fill="none" stroke="#f6f4ff" stroke-width="0.9"/><circle cx="9.4" cy="10.5" r="0.75" fill="#5a549c"/></svg>
<div class="t" style="left:240.40px;top:358.04px;font-size:12px;color:#222;transform:scaleX(0.9868);transform-origin:0 0;">Bảng kê biên lai thu tiền</div>
<div style="left:209px;top:375px;width:266px;height:23px;border:1px solid #a9c8ea;border-radius:3px;background:linear-gradient(#e6f0fc,#c6dcf6)"></div>
<div style="left:211px;top:377px;width:95px;height:20px;border:1px dotted #3a9a3a"></div>
<svg style="left:212px;top:378px" width="17" height="17" viewBox="0 0 17 17" opacity="1">
<defs><linearGradient id="pb212378" x1="0" y1="0" x2="1" y2="0.2"><stop offset="0" stop-color="#bdb8ec"/><stop offset="0.4" stop-color="#e2defc"/><stop offset="1" stop-color="#c2bdf0"/></linearGradient>
<linearGradient id="pp212378" x1="0" y1="0" x2="0" y2="1"><stop offset="0" stop-color="#8ad6fa"/><stop offset="1" stop-color="#3a9ee8"/></linearGradient></defs>
<path d="M1.1 3.4 L7.9 1.9 L9.4 5.5 L2.3 7.4Z" fill="url(#pp212378)" stroke="#3a94e0" stroke-width="0.6"/>
<path d="M0.6 9.8 C0.8 8.8 1.8 8.4 3 8.3 L12 6.6 C13.8 6.3 15 7.8 15 9.6 L14.8 12 C14.7 13 14 13.5 13 13.8 L3.5 15.6 C1.6 15.9 0.3 14.8 0.3 13.2Z" fill="url(#pb212378)" stroke="#716bb0" stroke-width="1.1"/>
<path d="M5.2 8 C6 10 6.3 12.5 6.1 15" fill="none" stroke="#f6f4ff" stroke-width="0.9"/><circle cx="9.4" cy="10.5" r="0.75" fill="#5a549c"/></svg>
<div class="t" style="left:240.40px;top:382.04px;font-size:12px;color:#222;transform:scaleX(0.9681);transform-origin:0 0;">Phiếu thu</div>
<div style="left:204px;top:371px;width:274px;height:32px;border:4px solid #e84444"></div>
<div style="left:326px;top:452px;width:345px;height:134px;background:#fff;border:1px solid #b4b4b4;box-shadow:1px 1px 2px rgba(0,0,0,0.2)"></div>
<div style="left:327px;top:453px;width:343px;height:30px;background:linear-gradient(#ffffff,#e2e2e2)"></div>
<svg style="left:326px;top:452px" width="30" height="30" viewBox="326 452 30 30">
<circle cx="345.8" cy="467" r="6.2" fill="#fff" stroke="#7cc242" stroke-width="2"/>
<path d="M340.5 465.2 L345.5 463.3 L350.5 465.2 L345.5 467Z" fill="#f8b850"/><path d="M341.8 466.5 V469 C343.5 470.3 347.5 470.3 349.2 469 V466.5 L345.5 468Z" fill="#f5a030"/>
<g stroke="#fff" stroke-width="1.6" fill="#fff"><ellipse cx="339.6" cy="465" rx="2.9" ry="3.6"/><path d="M331.4 471.2 C333.5 468.2 336.5 467.2 339 467.6 C341.3 468.5 342 471 341.2 473.5 C340.6 475 339.6 476 338.4 476.2 C336.5 474.5 334 473.5 331.4 471.2Z"/></g>
<g fill="#66bb30"><ellipse cx="339.6" cy="465" rx="2.9" ry="3.6"/><path d="M331.4 471.2 C333.5 468.2 336.5 467.2 339 467.6 C341.3 468.5 342 471 341.2 473.5 C340.6 475 339.6 476 338.4 476.2 C336.5 474.5 334 473.5 331.4 471.2Z"/></g></svg>
<div class="t" style="left:357.30px;top:460.84px;font-size:12px;font-weight:bold;color:#111;transform:scaleX(0.9222);transform-origin:0 0;">Tham số báo cáo</div>
<div style="left:652px;top:461px;width:15px;height:15px;border:1px solid #8ab4e8;border-radius:2px;background:linear-gradient(#fbfdff,#d6e4f8)"></div>
<svg style="left:652px;top:461px" width="15" height="15"><path d="M3.7 3.6 L11.4 11.1 M11.4 3.6 L3.7 11.1" stroke="#2a4a8a" stroke-width="1.7"/></svg>
<div class="t" style="left:340.70px;top:500.84px;font-size:12px;color:#222;transform:scaleX(0.9842);transform-origin:0 0;">Chọn mẫu</div>
<div class="t" style="left:398.20px;top:500.84px;font-size:12px;color:#e8204a;transform:scaleX(0.9470);transform-origin:0 0;">(*)</div>
<div style="left:447px;top:494px;width:205px;height:22px;border:1px solid #c8c8c8;border-radius:2px;background:#fff"></div>
<div style="left:635px;top:494px;width:17px;height:22px;border:1px solid #a8b6cc;border-radius:0 2px 2px 0;background:linear-gradient(#f4f4f4,#cfcfcf)"></div>
<svg style="left:635px;top:494px" width="17" height="22"><path d="M3.2 8.2 L7.9 12.6 L12.6 8.2" fill="none" stroke="#1f3e7c" stroke-width="2.6"/></svg>
<div class="t" style="left:451.00px;top:499.42px;font-size:12.5px;color:#111;transform:scaleX(0.9887);transform-origin:0 0;">Phiếu thu (mẫu C40BB - TT107)</div>
<div style="left:334px;top:548px;width:329px;height:1px;background:#d2d2d2"></div>
<div style="left:500px;top:557px;width:75px;height:22px;border:1px solid #9dbde0;border-radius:3px;background:linear-gradient(#eaf3fc 0%,#dceaf8 50%,#c8ddf4 52%,#c4daf4 100%)"></div>
<svg style="left:504px;top:561px" width="17" height="14"><path d="M1.5 7 L6 11.5 L15.5 2" fill="none" stroke="#3f9a3a" stroke-width="3"/></svg>
<div class="t" style="left:527.70px;top:562.84px;font-size:12px;color:#222;transform:scaleX(0.9203);transform-origin:0 0;">Đồng ý</div>
<div style="left:581px;top:557px;width:75px;height:22px;border:1px solid #c9c9c9;border-radius:3px;background:linear-gradient(#fafafa,#e2e2e2)"></div>
<svg style="left:584px;top:560px" width="17" height="17"><circle cx="8.5" cy="8.5" r="7.3" fill="#e2262e" stroke="#b01018" stroke-width="0.8"/><circle cx="8.5" cy="8.5" r="4.3" fill="none" stroke="#fff" stroke-width="1.6"/><path d="M5.5 11.5 L11.5 5.5" stroke="#fff" stroke-width="1.6"/></svg>
<div class="t" style="left:609.40px;top:562.84px;font-size:12px;color:#222;transform:scaleX(0.8940);transform-origin:0 0;">Hủy bỏ</div>
<svg style="left:280px;top:400px" width="70" height="70" viewBox="280 400 70 70">
<path d="M293 401 L329 450" stroke="#e84444" stroke-width="5" stroke-linecap="butt"/>
<path d="M321.5 455 L334 445.5 L336.5 462Z" fill="#e84444"/></svg>
<svg style="left:530px;top:568px" width="35" height="40" viewBox="530 568 35 40">
<path d="M543 590 L543 577 Q543 574.8 545.5 574.8 Q548 574.8 548 577 L548 583 Q548 581.5 550 581.5 Q552.3 581.5 552.3 583.5 L552.3 584.5 Q552.5 583.3 554.5 583.3 Q557.3 583.5 557.3 586.5 L557.3 593 Q557.3 599 555.8 602.3 L545.5 602.5 Q542.5 597 539.8 592.5 Q538.3 589.3 540 588.2 Q541.5 587.5 543 590Z" fill="#fff" stroke="#2a2a3a" stroke-width="1.6" stroke-linejoin="round"/>
<path d="M548 583 V588 M552.3 584.5 V588.5" stroke="#2a2a3a" stroke-width="1.1"/>
<path d="M545 600 L555 600" stroke="#d8d8d8" stroke-width="2"/></svg>
</body></html>
